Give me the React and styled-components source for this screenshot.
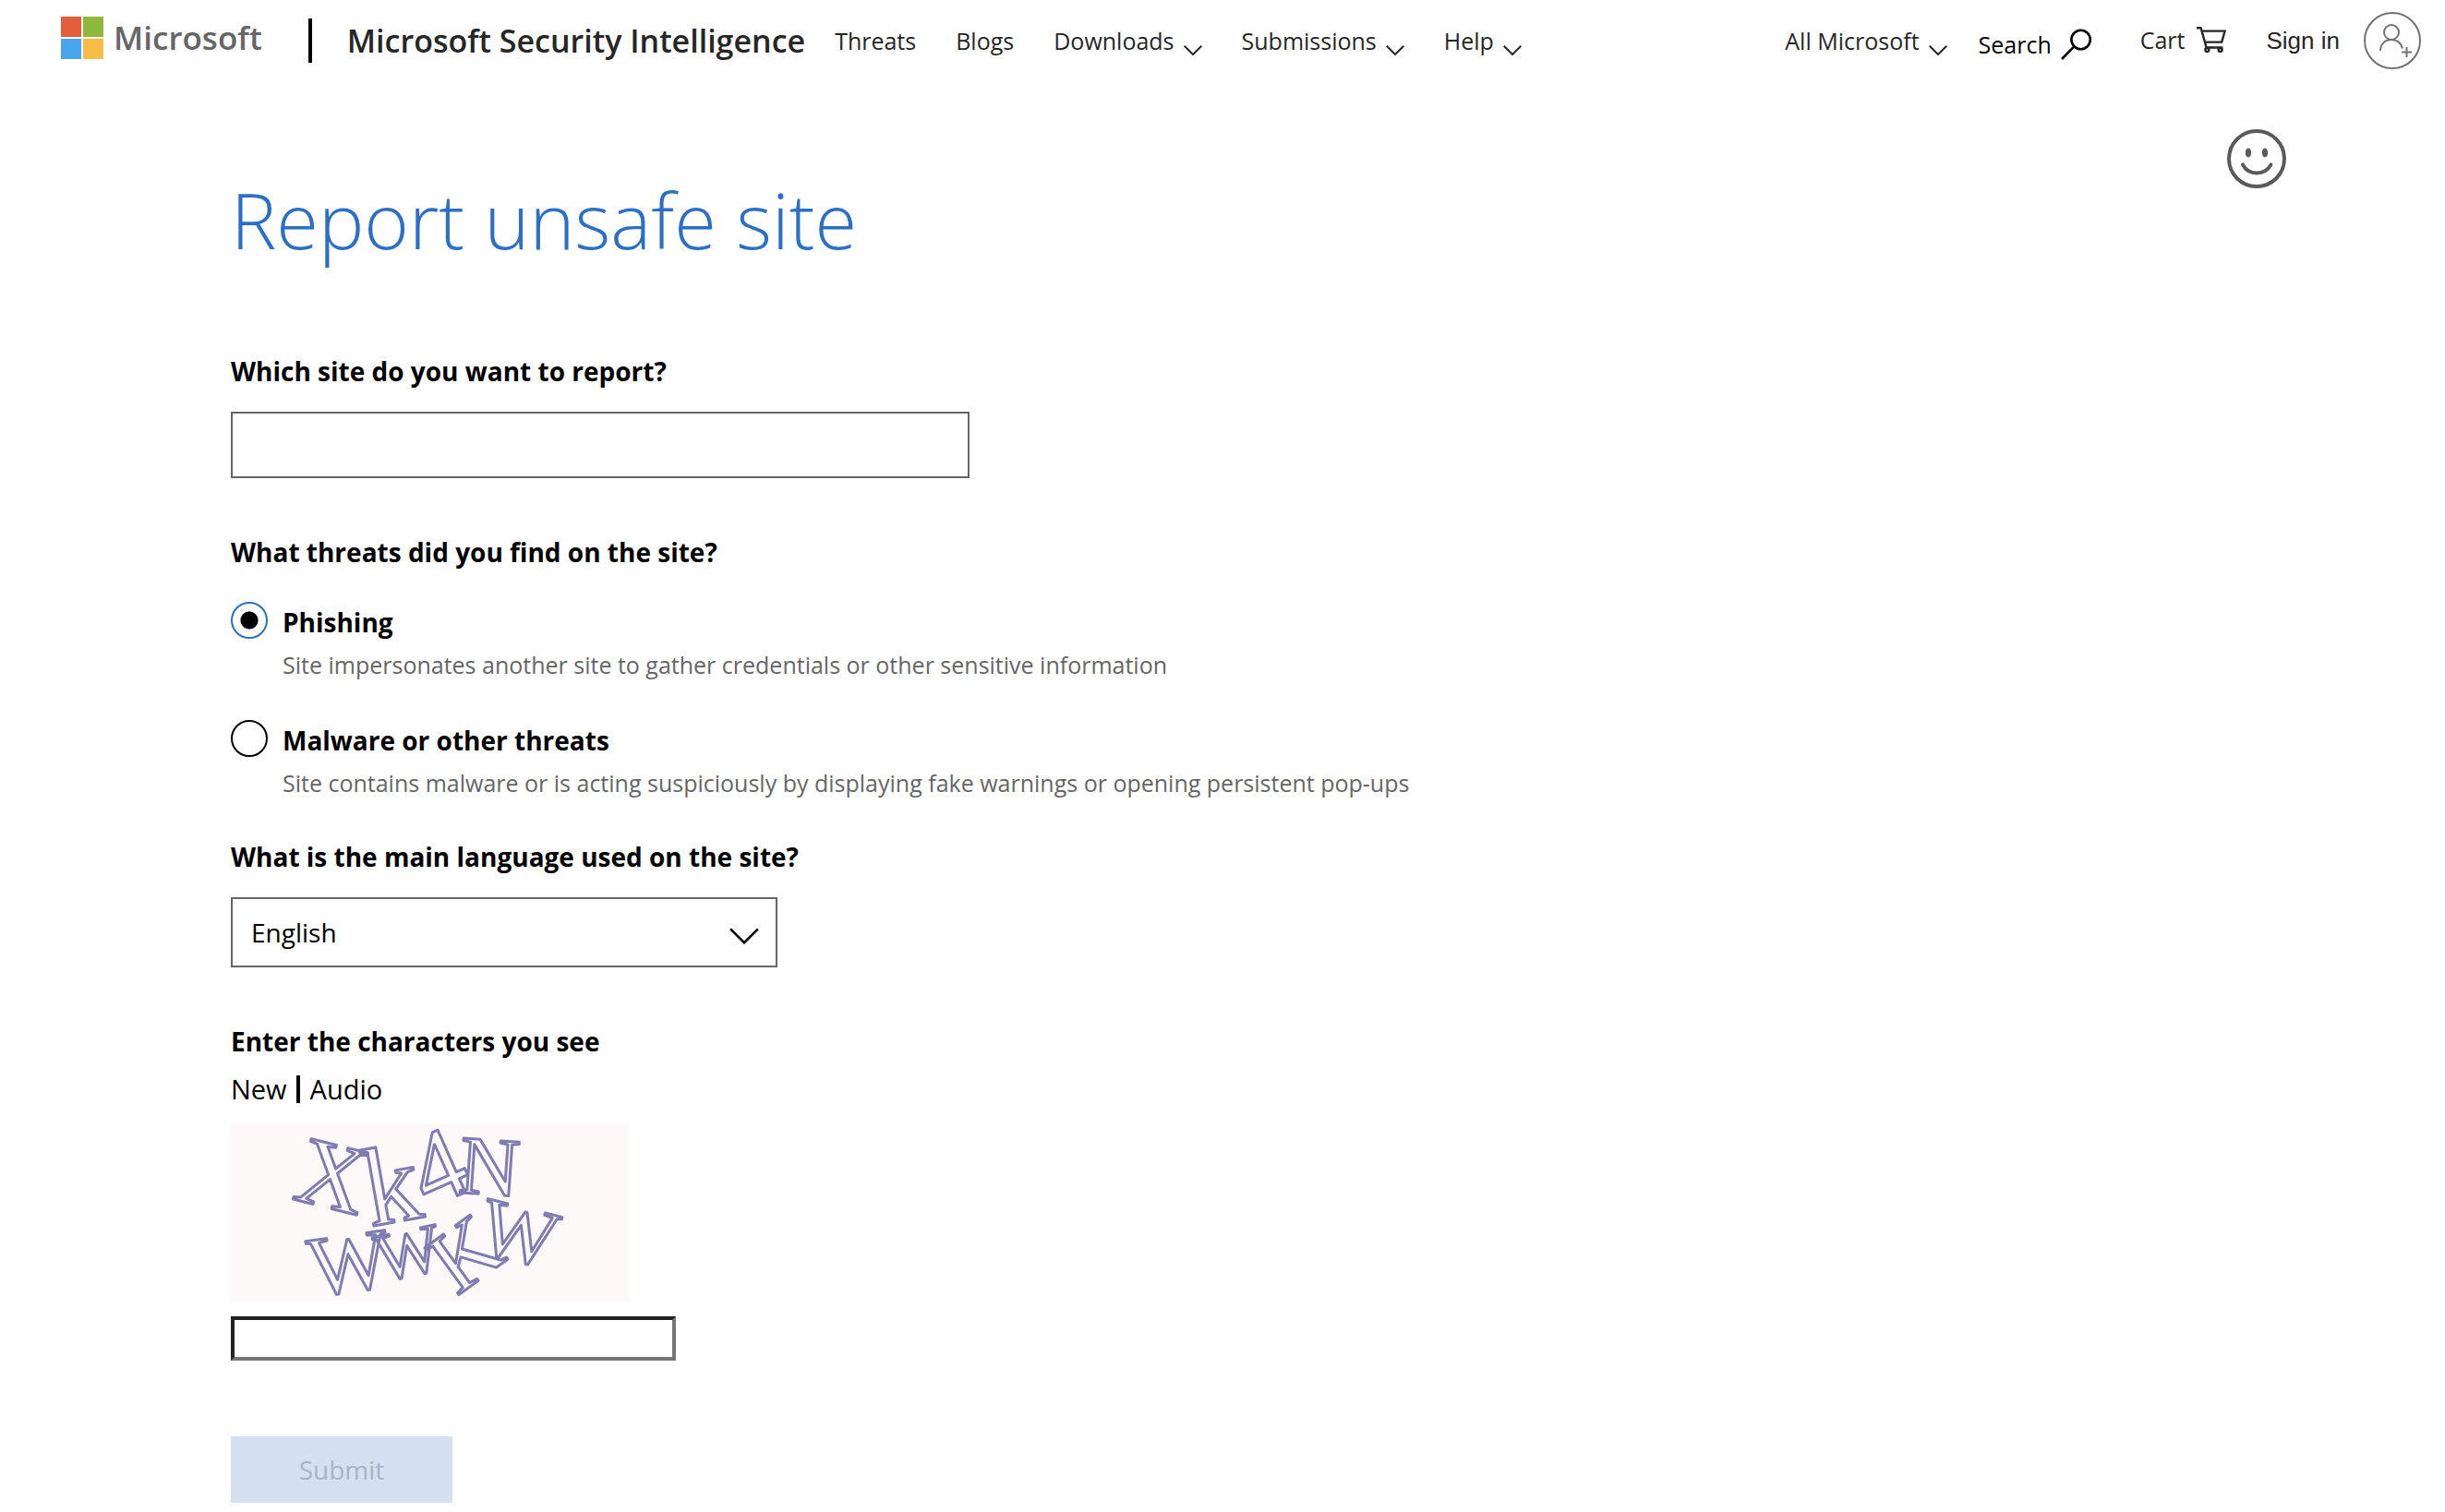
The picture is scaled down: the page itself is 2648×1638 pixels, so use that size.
import React from "react";
import styled, { createGlobalStyle } from "styled-components";

function Chevron({ width = 20, height = 11, thick = 2 }) {
  return (
    <svg width={width} height={height} viewBox="0 0 20 11" fill="none" stroke="currentColor" strokeWidth={thick} aria-hidden="true">
      <path d="M.7.7 10 10 19.3.7" />
    </svg>
  );
}

function SearchIcon() {
  return (
    <svg width="34" height="34" viewBox="0 0 34 34" fill="none" stroke="currentColor" strokeWidth="2.6" aria-hidden="true">
      <circle cx="21.6" cy="12" r="10.2" />
      <path d="M14.4 19.4 1 33" />
    </svg>
  );
}

function CartIcon() {
  return (
    <svg width="32" height="28" viewBox="0 0 32 28" fill="none" stroke="currentColor" strokeWidth="2.4" aria-hidden="true">
      <path d="M0 1.2h4.6l6 21.3h17.8M5.6 4.6h25l-3.4 12H9" />
      <circle cx="11.4" cy="25" r="2" />
      <circle cx="25.6" cy="25" r="2" />
    </svg>
  );
}

function AccountIcon() {
  return (
    <svg width="62" height="62" viewBox="0 0 62 62" fill="none" stroke="#737373" strokeWidth="2" aria-hidden="true">
      <circle cx="31" cy="31" r="30" />
      <circle cx="30" cy="22" r="8" />
      <path d="M18 42c0-7 5-12 12-12 6 0 10.5 3.6 12 9.6M46.5 38v11M41 43.5h11" />
    </svg>
  );
}

function SmileIcon() {
  return (
    <svg width="64" height="64" viewBox="0 0 64 64" fill="none" stroke="#595b5b" strokeWidth="4" strokeLinecap="round" aria-hidden="true">
      <circle cx="32" cy="32" r="30" />
      <path d="M17 38.4c6 12 24 12 30.5 0" />
      <ellipse cx="23" cy="25.5" rx="3.2" ry="5" fill="#595b5b" stroke="none" />
      <ellipse cx="41" cy="25.5" rx="3.2" ry="5" fill="#595b5b" stroke="none" />
    </svg>
  );
}

// x and y are the middle of each letter
const captchaLetters = [
  { char: "X", x: 110, y: 56, size: 104, angle: 14 },
  { char: "k", x: 174, y: 66, size: 120, angle: -10 },
  { char: "4", x: 224, y: 46, size: 112, angle: -24 },
  { char: "N", x: 280, y: 46, size: 90, angle: 4 },
  { char: "W", x: 128, y: 150, size: 92, angle: -8 },
  { char: "W", x: 192, y: 139, size: 74, angle: -12 },
  { char: "K", x: 254, y: 140, size: 96, angle: -36 },
  { char: "W", x: 312, y: 118, size: 88, angle: 14 },
];

function App() {
  return (
    <Page>
      <GlobalStyle />
      <Header>
        <Logo href="#">
          <svg width="46" height="46" viewBox="0 0 46 46" aria-hidden="true">
            <path fill="#e35f3a" d="M0 0h22v22H0z" />
            <path fill="#8eb93a" d="M24 0h22v22H24z" />
            <path fill="#4aa5ec" d="M0 24h22v22H0z" />
            <path fill="#f7bd47" d="M24 24h22v22H24z" />
          </svg>
          <span>Microsoft</span>
        </Logo>
        <SiteName href="#">Microsoft Security Intelligence</SiteName>
        <Nav>
          <NavLink href="#">Threats</NavLink>
          <NavLink href="#">Blogs</NavLink>
          <NavButton type="button">Downloads <Chevron /></NavButton>
          <NavButton type="button">Submissions <Chevron /></NavButton>
          <NavButton type="button">Help <Chevron /></NavButton>
        </Nav>
        <Tools>
          <NavButton type="button">All Microsoft <Chevron /></NavButton>
          <SearchButton type="button">Search <SearchIcon /></SearchButton>
          <CartLink href="#">Cart <CartIcon /></CartLink>
          <SignIn href="#">Sign in <AccountIcon /></SignIn>
        </Tools>
      </Header>
      <Main>
        <Feedback type="button" aria-label="Feedback">
          <SmileIcon />
        </Feedback>
        <Title>Report unsafe site</Title>
        <form>
          <Field>
            <Label htmlFor="site">Which site do you want to report?</Label>
            <SiteInput id="site" type="text" />
          </Field>
          <Threats>
            <legend>What threats did you find on the site?</legend>
            <Option>
              <input id="phishing" type="radio" name="threat" defaultChecked />
              <label htmlFor="phishing">Phishing</label>
              <p>Site impersonates another site to gather credentials or other sensitive information</p>
            </Option>
            <Option>
              <input id="malware" type="radio" name="threat" />
              <label htmlFor="malware">Malware or other threats</label>
              <p>Site contains malware or is acting suspiciously by displaying fake warnings or opening persistent pop-ups</p>
            </Option>
          </Threats>
          <Field>
            <Label htmlFor="language">What is the main language used on the site?</Label>
            <SelectBox>
              <select id="language" defaultValue="English">
                <option>English</option>
              </select>
              <Chevron width={32} height={18} thick={1.6} />
            </SelectBox>
          </Field>
          <Label htmlFor="captcha">Enter the characters you see</Label>
          <CaptchaLinks>
            <a href="#">New</a>
            <a href="#">Audio</a>
          </CaptchaLinks>
          <Captcha viewBox="0 0 432 192">
            {captchaLetters.map(({ char, x, y, size, angle }, i) => (
              <text key={i} y={size / 3} fontSize={size} transform={`translate(${x} ${y}) rotate(${angle})`}>
                {char}
              </text>
            ))}
          </Captcha>
          <CaptchaInput id="captcha" type="text" />
          <Submit type="submit" disabled>Submit</Submit>
        </form>
      </Main>
    </Page>
  );
}

const GlobalStyle = createGlobalStyle`
  * {
    box-sizing: border-box;
  }
  body {
    margin: 0;
    background: #fff;
    color: #000;
  }
  body, button, input, select {
    font-family: "Segoe UI", "Open Sans", sans-serif;
  }
  a {
    color: inherit;
    text-decoration: none;
  }
  svg {
    flex-shrink: 0;
  }
`;

const Page = styled.div`
  overflow-x: hidden;
`;

const Header = styled.header`
  display: flex;
  align-items: center;
  height: 88px;
  padding: 0 26px 0 66px;
  color: #262626;
  white-space: nowrap;
`;

const Logo = styled.a`
  display: flex;
  align-items: center;
  gap: 11px;
  padding-bottom: 6px;
  span {
    color: #666;
    font-size: 35px;
    font-weight: 600;
    line-height: 46px;
  }
`;

const SiteName = styled.a`
  margin-left: 50px;
  padding-left: 38px;
  border-left: 4px solid #000;
  font-size: 34px;
  font-weight: 600;
  line-height: 48px;
`;

const Nav = styled.nav`
  display: flex;
  gap: 43px;
  margin-left: 32px;
`;

const NavLink = styled.a`
  font-size: 25px;
  line-height: 36px;
`;

const NavButton = styled.button`
  display: flex;
  align-items: center;
  gap: 10px;
  padding: 0;
  border: 0;
  background: none;
  color: inherit;
  font-size: 25px;
  line-height: 36px;
  svg {
    margin-top: 20px;
  }
`;

const Tools = styled.div`
  display: flex;
  align-items: center;
  gap: 34px;
  margin-left: auto;
`;

const SearchButton = styled(NavButton)`
  padding-top: 8px;
  color: #000;
  svg {
    margin-top: 0;
  }
`;

const CartLink = styled.a`
  display: flex;
  align-items: center;
  gap: 12px;
  margin-left: 18px;
  padding-bottom: 3px;
  font-size: 25px;
  line-height: 36px;
`;

const SignIn = styled(CartLink)`
  gap: 26px;
  margin-left: 10px;
  padding-bottom: 0;
  font-family: "Liberation Sans", Arial, sans-serif;
  font-size: 26px;
`;

const Main = styled.main`
  position: relative;
  padding: 90px 250px 0;
`;

const Feedback = styled.button`
  position: absolute;
  top: 52px;
  right: 172px;
  display: flex;
  padding: 0;
  border: 0;
  background: none;
`;

const Title = styled.h1`
  margin: 0 0 84px;
  color: #2b70c6;
  font-size: 83px;
  font-weight: 300;
  line-height: 120px;
`;

const Field = styled.div`
  margin-bottom: 60px;
`;

const Label = styled.label`
  display: block;
  margin-bottom: 24px;
  font-size: 28px;
  font-weight: 700;
  line-height: 40px;
`;

const SiteInput = styled.input`
  display: block;
  width: 800px;
  max-width: 100%;
  height: 72px;
  padding: 0 22px;
  border: 2px solid #666;
  font-size: 28px;
`;

const Threats = styled.fieldset`
  margin: 0 0 40px;
  padding: 0;
  border: 0;
  legend {
    margin-bottom: 34px;
    padding: 0;
    font-size: 28px;
    font-weight: 700;
    line-height: 40px;
  }
`;

const Option = styled.div`
  display: grid;
  grid-template-columns: 40px 1fr;
  column-gap: 16px;
  & + & {
    margin-top: 40px;
  }
  input {
    appearance: none;
    width: 40px;
    height: 40px;
    margin: 0;
    border: 2px solid #000;
    border-radius: 50%;
  }
  input:checked {
    border-color: #2b70c6;
    background: radial-gradient(circle, #000 9px, transparent 10px);
  }
  label {
    font-size: 28px;
    font-weight: 700;
    line-height: 44px;
  }
  p {
    grid-column: 2;
    margin: 4px 0 0;
    color: #666;
    font-size: 25px;
    line-height: 40px;
  }
`;

const SelectBox = styled.div`
  display: grid;
  align-items: center;
  width: 592px;
  max-width: 100%;
  select,
  svg {
    grid-area: 1 / 1;
  }
  select {
    appearance: none;
    width: 100%;
    height: 76px;
    padding: 0 20px;
    border: 2px solid #666;
    border-radius: 0;
    background: #fff;
    color: #000;
    font-size: 28px;
  }
  svg {
    justify-self: end;
    margin: 8px 20px 0 0;
    pointer-events: none;
  }
`;

const CaptchaLinks = styled.div`
  display: flex;
  align-items: center;
  margin: -12px 0 18px;
  font-size: 29px;
  line-height: 40px;
  a + a {
    margin-left: 10px;
    padding-left: 11px;
    border-left: 4px solid #000;
    line-height: 30px;
  }
`;

const Captcha = styled.svg`
  display: block;
  width: 432px;
  height: 192px;
  overflow: visible;
  background: #fdf9f9;
  text {
    fill: none;
    stroke: #7e7cb2;
    stroke-width: 3px;
    stroke-linejoin: round;
    font-family: "Liberation Serif", serif;
    text-anchor: middle;
  }
`;

const CaptchaInput = styled.input`
  display: block;
  width: 482px;
  max-width: 100%;
  height: 48px;
  margin: 16px 0 82px;
  border: 4px solid;
  border-color: #222 #767676 #767676 #222;
  font-size: 28px;
`;

const Submit = styled.button`
  display: block;
  width: 240px;
  height: 72px;
  border: 0;
  background: #d5e1f1;
  color: #a9b5c2;
  font-size: 28px;
`;

export default App;
